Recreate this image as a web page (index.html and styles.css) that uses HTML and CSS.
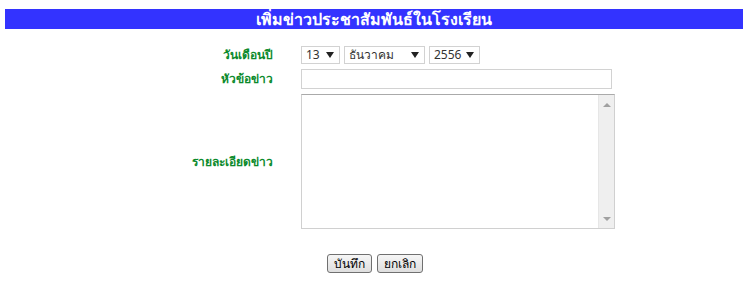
FILE: index.html
```html
<!DOCTYPE html>
<html>
<head>
<meta charset="utf-8">
<link rel="stylesheet" href="styles.css">
</head>
<body>

<div class="title">เพิ่มข่าวประชาสัมพันธ์ในโรงเรียน</div>

<form class="news-form">
  <label class="lbl">วันเดือนปี</label>
  <div class="date-row">
    <span class="sel sel-day"><select><option>13</option></select></span>
    <span class="sel sel-month"><select><option>ธันวาคม</option></select></span>
    <span class="sel sel-year"><select><option>2556</option></select></span>
  </div>

  <label class="lbl">หัวข้อข่าว</label>
  <div><input type="text" class="topic"></div>

  <label class="lbl">รายละเอียดข่าว</label>
  <div class="detail-box">
    <textarea class="detail"></textarea>
    <div class="scrollbar">
      <span class="arrow-up"></span>
      <span class="arrow-down"></span>
    </div>
  </div>

  <div class="buttons">
    <button type="button">บันทึก</button>
    <button type="button">ยกเลิก</button>
  </div>
</form>

</body>
</html>
```

FILE: styles.css
```css
* {box-sizing: border-box;}
body {
    margin: 9px 12px 0 5px;
    font-family: Tahoma, "Noto Sans", "DejaVu Sans", sans-serif;
    background: #fff;
}

.title {
    background: #3333ff;
    color: #fff;
    font-weight: bold;
    font-size: 16px;
    height: 20px;
    line-height: 20px;
    text-align: center;
    overflow: hidden;
}

.news-form {
    display: grid;
    grid-template-columns: 268px auto;
    column-gap: 28px;
    row-gap: 5px;
    margin-top: 17px;
    align-items: center;
}

.lbl {
    text-align: right;
    color: #0c8a2c;
    font-weight: bold;
    font-size: 12px;
    line-height: 18px;
}

.date-row {
    display: flex;
    gap: 4px;
    height: 18px;
}

/* select boxes with a flat look */
.sel {
    position: relative;
    display: block;
    height: 18px;
}
.sel select {
    appearance: none;
    -webkit-appearance: none;
    display: block;
    width: 100%;
    height: 18px;
    font-family: Tahoma, "Noto Sans", sans-serif;
    font-size: 12px;
    line-height: 16px;
    border: 1px solid #d2d2d2;
    background: #fff;
    padding: 0 0 0 4px;
    color: #333;
}
.sel::after {
    content: "";
    position: absolute;
    right: 6px;
    top: 6px;
    border-left: 4px solid transparent;
    border-right: 4px solid transparent;
    border-top: 6px solid #222;
    pointer-events: none;
}
.sel-day {width: 39px;}
.sel-month {width: 81px;}
.sel-year {width: 51px;}

.topic {
    display: block;
    width: 311px;
    height: 20px;
    border: 1px solid #d2d2d2;
}

.detail-box {
    display: flex;
    width: 314px;
    height: 135px;
    border: 1px solid #d0d0d0;
    border-top-color: #aaa;
}

.detail {
    flex: 1;
    height: 100%;
    border: none;
    resize: none;
    outline: none;
}

.scrollbar {
    width: 16px;
    background: #efefef;
    border-left: 1px solid #e6e6e6;
    display: flex;
    flex-direction: column;
    justify-content: space-between;
    align-items: center;
    padding: 8px 0 7px;
}
.arrow-up {
    border-left: 4px solid transparent;
    border-right: 4px solid transparent;
    border-bottom: 4px solid #a0a0a0;
}
.arrow-down {
    border-left: 4px solid transparent;
    border-right: 4px solid transparent;
    border-top: 4px solid #a0a0a0;
}

.buttons {
    grid-column: 1 / 3;
    display: flex;
    justify-content: center;
    gap: 5px;
    margin-top: 20px;
    padding-left: 2px;
}

.buttons button {
    font-family: Tahoma, "Noto Sans", sans-serif;
    font-size: 12px;
    line-height: 17px;
    height: 19px;
    padding: 0 6px;
    background: linear-gradient(#f6f6f6, #dedede);
    border: 1px solid #707070;
    border-radius: 3px;
    color: #000;
}
```
